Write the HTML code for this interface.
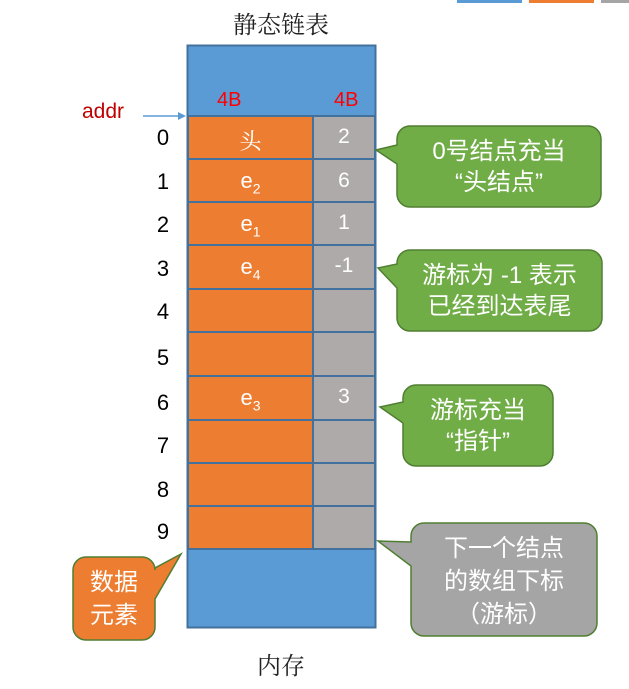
<!DOCTYPE html>
<html><head><meta charset="utf-8"><style>
body{margin:0;width:629px;height:689px;background:#fff;position:relative;overflow:hidden;font-family:"Liberation Sans","Noto Sans CJK SC",sans-serif}
.a{position:absolute}
.lbl{position:absolute;width:30px;text-align:center;font-size:22px;color:#000}
.c{position:absolute;color:#fff;text-align:center;font-size:22px}
</style></head><body>
<div class="a" style="left:457px;top:0;width:65px;height:3px;background:#5b9bd5"></div>
<div class="a" style="left:529px;top:0;width:65px;height:3px;background:#ed7d31"></div>
<div class="a" style="left:601px;top:0;width:28px;height:3px;background:#a5a5a5"></div>
<div class="a" style="left:200px;top:5px;width:162px;text-align:center;font-size:24px;color:#222;font-family:'Liberation Serif','Noto Serif CJK SC',serif">静态链表</div>
<div class="a" style="left:200px;top:646px;width:162px;text-align:center;font-size:24px;color:#222;font-family:'Liberation Serif','Noto Serif CJK SC',serif">内存</div>
<svg class="a" style="left:0;top:0" width="629" height="689">
<rect x="187.5" y="45.5" width="188" height="582" fill="#5b9bd5" stroke="#41719c" stroke-width="2"/>
<g stroke="#41719c" stroke-width="2">
<rect x="188" y="116" width="125" height="433" fill="#ed7d31"/>
<rect x="313" y="116" width="62" height="433" fill="#aeaaaa"/>
<path d="M188 159H375M188 202H375M188 245H375M188 289H375M188 332H375M188 376H375M188 420H375M188 463H375M188 506H375M188 549H375M313 116V549" fill="none"/>
</g>
<path d="M143 116H180" stroke="#5b9bd5" stroke-width="1.5"/><path d="M186 116l-8-4v8z" fill="#5b9bd5"/>
<path d="M410 126h178a13 13 0 0 1 13 13v55a13 13 0 0 1-13 13h-178a13 13 0 0 1-13-13v-30l-21-14l21-5v-6a13 13 0 0 1 13-13z" fill="#70ad47" stroke="#507e32" stroke-width="1.5"/>
<path d="M410 250h179a13 13 0 0 1 13 13v55a13 13 0 0 1-13 13h-179a13 13 0 0 1-13-13v-30l-19-20l19-4v-1a13 13 0 0 1 13-13z" fill="#70ad47" stroke="#507e32" stroke-width="1.5"/>
<path d="M416 385h124a13 13 0 0 1 13 13v55a13 13 0 0 1-13 13h-124a13 13 0 0 1-13-13v-30l-23-16l23-5v-4a13 13 0 0 1 13-13z" fill="#70ad47" stroke="#507e32" stroke-width="1.5"/>
<path d="M424 523h160a13 13 0 0 1 13 13v87a13 13 0 0 1-13 13h-160a13 13 0 0 1-13-13v-57l-33-25l33 1v-6a13 13 0 0 1 13-13z" fill="#a5a5a5" stroke="#507e32" stroke-width="1.5"/>
<path d="M86 557h56a13 13 0 0 1 13 13v-2l26-14l-26 45v28a13 13 0 0 1-13 13h-56a13 13 0 0 1-13-13v-57a13 13 0 0 1 13-13z" fill="#ed7d31" stroke="#507e32" stroke-width="1.5"/>
</svg>
<div class="a" style="left:82px;top:100px;font-size:21px;color:#c00000">addr</div>
<div class="a" style="left:217px;top:89px;font-size:20px;color:#ff0000">4B</div>
<div class="a" style="left:334px;top:89px;font-size:20px;color:#ff0000">4B</div>
<div class="lbl" style="left:148px;top:125px">0</div>
<div class="lbl" style="left:148px;top:169px">1</div>
<div class="lbl" style="left:148px;top:212px">2</div>
<div class="lbl" style="left:148px;top:256px">3</div>
<div class="lbl" style="left:148px;top:299px">4</div>
<div class="lbl" style="left:148px;top:345px">5</div>
<div class="lbl" style="left:148px;top:390px">6</div>
<div class="lbl" style="left:148px;top:433px">7</div>
<div class="lbl" style="left:148px;top:477px">8</div>
<div class="lbl" style="left:148px;top:519px">9</div>
<div class="c" style="left:188px;top:125px;width:125px;font-family:'Liberation Serif','Noto Serif CJK SC',serif">头</div>
<div class="c" style="left:188px;top:168px;width:125px">e<sub style="font-size:14px">2</sub></div>
<div class="c" style="left:188px;top:211px;width:125px">e<sub style="font-size:14px">1</sub></div>
<div class="c" style="left:188px;top:254px;width:125px">e<sub style="font-size:14px">4</sub></div>
<div class="c" style="left:188px;top:385px;width:125px">e<sub style="font-size:14px">3</sub></div>
<div class="c" style="left:313px;top:125px;width:62px;font-size:21px">2</div>
<div class="c" style="left:313px;top:169px;width:62px;font-size:21px">6</div>
<div class="c" style="left:313px;top:211px;width:62px;font-size:21px">1</div>
<div class="c" style="left:313px;top:254px;width:62px;font-size:21px">-1</div>
<div class="c" style="left:313px;top:385px;width:62px;font-size:21px">3</div>
<div class="c" style="left:397px;top:136px;width:204px;font-size:24px;line-height:31px">0号结点充当<br>“头结点”</div>
<div class="c" style="left:397px;top:260px;width:205px;font-size:24px;line-height:31px">游标为 -1 表示<br>已经到达表尾</div>
<div class="c" style="left:403px;top:395px;width:150px;font-size:24px;line-height:31px">游标充当<br>“指针”</div>
<div class="c" style="left:411px;top:532px;width:186px;font-size:24px;line-height:33px">下一个结点<br>的数组下标<br>（游标）</div>
<div class="c" style="left:73px;top:566px;width:82px;font-size:24px;line-height:33px">数据<br>元素</div>
</body></html>
